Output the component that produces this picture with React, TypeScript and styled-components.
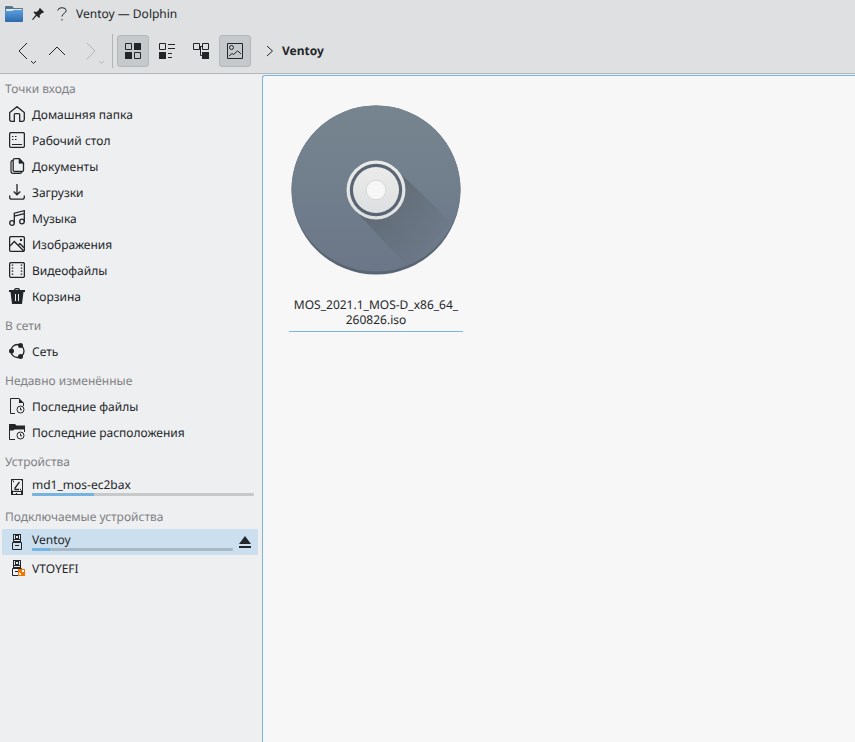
import React from "react";
import styled, { createGlobalStyle } from "styled-components";

const ink = "#232629";

const GlobalStyle = createGlobalStyle`
  *, *::before, *::after { box-sizing: border-box; }
  html, body, #root { height: 100%; }
  body {
    margin: 0;
    background: #eeeff1;
    color: ${ink};
    font-family: "Noto Sans", "Open Sans", sans-serif;
    font-size: 12px;
    line-height: 16px;
    text-rendering: geometricPrecision;
  }
  button { font: inherit; color: inherit; }
`;

const Window = styled.div`
  display: flex;
  flex-direction: column;
  min-height: 100vh;
`;

const Chrome = styled.header`
  background: #dee0e2;
  border-bottom: 1px solid #b2b4b7;
`;

const TitleBar = styled.div`
  display: flex;
  align-items: center;
  height: 28px;
  padding-left: 4px;
`;

const TitleButtons = styled.div`
  display: flex;
  margin-left: 2px;
`;

const TitleButton = styled.button`
  display: flex;
  align-items: center;
  justify-content: center;
  width: 24px;
  height: 24px;
  padding: 0;
  border: 0;
  background: none;
`;

const Title = styled.h1`
  margin: 0 0 0 2px;
  font-size: 12px;
  font-weight: 400;
`;

const Toolbar = styled.nav`
  display: flex;
  align-items: center;
  gap: 2px;
  height: 45px;
  padding: 0 7px;
`;

const ToolButton = styled.button<{ $checked?: boolean }>`
  position: relative;
  display: flex;
  align-items: center;
  justify-content: center;
  width: 32px;
  height: 32px;
  padding: 0;
  border: 1px solid ${(p) => (p.$checked ? "#b5b8ba" : "transparent")};
  border-radius: 3px;
  background: ${(p) => (p.$checked ? "#c5c9cc" : "transparent")};
  &:disabled { color: #b3b6b9; }
`;

const MenuMark = styled.svg`
  position: absolute;
  right: 1px;
  bottom: 1px;
`;

const Separator = styled.div`
  width: 1px;
  height: 34px;
  margin: 0 2px 0 3px;
  background: #b2b4b7;
`;

const Breadcrumb = styled.a`
  display: flex;
  align-items: center;
  gap: 5px;
  margin-left: 8px;
  color: inherit;
  font-weight: 700;
  text-decoration: none;
`;

const Body = styled.div`
  display: grid;
  grid-template-columns: 262px 1fr;
  flex: 1;
`;

const Sidebar = styled.aside`
  padding: 1px 4px 1px 2px;
`;

const Section = styled.section`
  margin-bottom: 3px;
`;

const Heading = styled.h2`
  margin: 0;
  padding: 6px 3px 4px;
  color: #7f8183;
  font-size: 12px;
  font-weight: 400;
`;

const List = styled.ul`
  margin: 0;
  padding: 0;
  list-style: none;
`;

const Row = styled.li<{ $selected?: boolean }>`
  display: flex;
  align-items: center;
  height: 26px;
  background: ${(p) => (p.$selected ? "#cbdfef" : "transparent")};
`;

const Place = styled.a`
  display: flex;
  flex: 1;
  align-items: center;
  gap: 7px;
  padding: 0 4px 0 7px;
  color: inherit;
  text-decoration: none;
  white-space: nowrap;
`;

const PlaceBody = styled.span<{ $metered: boolean }>`
  flex: 1;
  padding: ${(p) => (p.$metered ? "0 0 1px" : "2px 0 0")};
`;

const Capacity = styled.span<{ $selected?: boolean }>`
  display: block;
  height: 3px;
  overflow: hidden;
  border-radius: 1px;
  background: ${(p) => (p.$selected ? "#a8b8c5" : "#c6c8c9")};
`;

const Used = styled.span`
  display: block;
  height: 100%;
  background: #76b3df;
`;

const Eject = styled.button`
  display: flex;
  align-items: center;
  justify-content: center;
  width: 16px;
  height: 24px;
  margin-right: 5px;
  padding: 0;
  border: 0;
  background: none;
`;

const View = styled.main`
  display: flex;
  flex-wrap: wrap;
  align-items: flex-start;
  align-content: flex-start;
  margin-top: 1px;
  padding: 29px 26px;
  border: solid #79b5dc;
  border-width: 1px 0 0 1px;
  border-top-left-radius: 3px;
  background: #f7f7f7;
`;

const File = styled.figure`
  display: flex;
  flex-direction: column;
  align-items: center;
  width: 174px;
  margin: 0;
  border-bottom: 1px solid #79b5dc;
`;

const FileName = styled.figcaption`
  margin-top: 22px;
  padding-bottom: 4px;
  line-height: 15px;
  text-align: center;
`;

type GlyphProps = { children: React.ReactNode };
const Glyph = ({ children }: GlyphProps) => (
  <svg width="16" height="16" viewBox="0 0 16 16" fill="none" stroke="currentColor" aria-hidden="true">
    {children}
  </svg>
);

const Clock = () => (
  <>
    <circle cx="11.5" cy="11.5" r="3.5" />
    <path d="M11.5 9.5v2.3H13" />
  </>
);

const Usb = () => (
  <>
    <path d="M4 0h8v8H4z" fill="currentColor" stroke="none" />
    <path d="M5 1h1v4H5zM7 2h2v2H7zM10 1h1v4h-1zM5 6h6v1H5z" fill="#e3e9ee" stroke="none" />
    <path d="M3.500 8.500h9v7h-9zM6 11.500h4" />
  </>
);

const icons = {
  home: (
    <Glyph>
      <path d="M.7 13.5V6.6L8 .7l7.3 5.9v6.9q0 1.8-1.8 1.8h-2.8V8.6q0-1-1-1H6.3q-1 0-1 1v6.700H2.5Q.7 15.3.7 13.5z" strokeWidth="1.3" />
    </Glyph>
  ),
  desktop: (
    <Glyph>
      <rect x=".6" y=".6" width="14.8" height="14.8" rx="1.5" strokeWidth="1.3" />
      <path d="M3 4.500h1.500M6 4.500h1.500M3 7.500h1.500M6 7.500h1.500M3 12.500h10" strokeWidth="1.2" />
    </Glyph>
  ),
  documents: (
    <Glyph>
      <path d="M4 2.300q-2 0-2 2v9q0 2 2 2h7q1.500 0 1.800-1.500" strokeWidth="1.2" />
      <path d="M5.800.7h4.500l4.200 4.200v7q0 1.600-1.600 1.600H5.800q-1.600 0-1.600-1.600V2.300Q4.200.7 5.800.7z" strokeWidth="1.3" />
      <path d="M10 .7v4.600h4.500z" fill="currentColor" strokeWidth=".6" />
    </Glyph>
  ),
  downloads: (
    <Glyph>
      <path d="M8 0v10.500M4.700 7.500 8 10.800l3.300-3.300M.7 11.500v1.800q0 1.900 1.900 1.900h10.800q1.900 0 1.900-1.900v-1.800" strokeWidth="1.3" />
    </Glyph>
  ),
  music: (
    <Glyph>
      <path d="M5.300 13V3.200L15.300.7v10.800M5.300 6.200l10-2.500" strokeWidth="1.3" />
      <circle cx="3" cy="13" r="2.3" strokeWidth="1.3" />
      <circle cx="13" cy="11.5" r="2.3" strokeWidth="1.3" />
    </Glyph>
  ),
  images: (
    <Glyph>
      <rect x=".6" y=".6" width="14.8" height="14.8" rx="1.5" strokeWidth="1.3" />
      <path d="m1 10 4.300-4.500 9.500 9.500M9 9.500l2-1.800 4 4" strokeWidth="1.3" />
      <path d="M11 3h2v2h-2z" fill="currentColor" stroke="none" />
    </Glyph>
  ),
  videos: (
    <Glyph>
      <rect x=".6" y=".6" width="14.8" height="14.8" rx="1.5" strokeWidth="1.3" />
      <path d="M3.500 2.500v11.500M12.500 2.500v11.500" strokeDasharray="1.3 1.7" strokeWidth="1.5" />
    </Glyph>
  ),
  trash: (
    <Glyph>
      <path d="M5.500 2.500q0-2 2.500-2t2.500 2" strokeWidth="1.3" />
      <path d="M0 2h16v2h-1.500L13 16H3L1.500 4H0z" fill="currentColor" stroke="none" />
      <path d="M6.500 6v7M9.500 6v7" stroke="#eeeff1" />
    </Glyph>
  ),
  network: (
    <Glyph>
      <circle cx="8.500" cy="8" r="6.500" strokeWidth="1.3" />
      <g fill="currentColor" stroke="none">
        <circle cx="2.500" cy="8" r="2.500" />
        <circle cx="11.500" cy="2.500" r="2.500" />
        <circle cx="11.500" cy="13.500" r="2.500" />
      </g>
    </Glyph>
  ),
  recentFiles: (
    <Glyph>
      <path d="M6 15.500H1.500V.5H10M14.500 5v3" />
      <path d="M10 0v5h5z" fill="currentColor" stroke="none" />
      <Clock />
    </Glyph>
  ),
  recentPlaces: (
    <Glyph>
      <path d="M0 0h6l1.500 1.500H16v4H5.500L4 6.500H0z" fill="currentColor" stroke="none" />
      <path d="M.5 5v10.500H6M15.500 5v3" />
      <Clock />
    </Glyph>
  ),
  disk: (
    <Glyph>
      <path d="M2 0h12v16H2z" fill="currentColor" stroke="none" />
      <path d="M4 1h8l1 1v9l-1 1H4l-1-1V2zM4 13h8v2H4z" fill="#eeeff1" stroke="none" />
      <path d="M10.500 3 6 9v1.500h4M4 2.500h1M11 10.500h1M7.500 14v1" strokeWidth="1.3" />
    </Glyph>
  ),
  usb: (
    <Glyph>
      <Usb />
    </Glyph>
  ),
  usbUnmounted: (
    <Glyph>
      <Usb />
      <rect x="9" y="9" width="7" height="7" fill="#f67400" stroke="none" />
      <path d="m10 15 2-2M13 12l2-2M10.500 12.500v2H12M13 10.500h1.500V12" stroke="#fff" />
    </Glyph>
  ),
};

type Item = { label: string; icon: keyof typeof icons; used?: number; selected?: boolean };
const sections: { title: string; items: Item[] }[] = [
  {
    title: "Точки входа",
    items: [
      { label: "Домашняя папка", icon: "home" },
      { label: "Рабочий стол", icon: "desktop" },
      { label: "Документы", icon: "documents" },
      { label: "Загрузки", icon: "downloads" },
      { label: "Музыка", icon: "music" },
      { label: "Изображения", icon: "images" },
      { label: "Видеофайлы", icon: "videos" },
      { label: "Корзина", icon: "trash" },
    ],
  },
  { title: "В сети", items: [{ label: "Сеть", icon: "network" }] },
  {
    title: "Недавно изменённые",
    items: [
      { label: "Последние файлы", icon: "recentFiles" },
      { label: "Последние расположения", icon: "recentPlaces" },
    ],
  },
  { title: "Устройства", items: [{ label: "md1_mos-ec2bax", icon: "disk", used: 28 }] },
  {
    title: "Подключаемые устройства",
    items: [
      { label: "Ventoy", icon: "usb", used: 9, selected: true },
      { label: "VTOYEFI", icon: "usbUnmounted" },
    ],
  },
];

const SmallArrow = () => (
  <MenuMark width="7" height="5" viewBox="0 0 7 5" fill="none" stroke="currentColor" aria-hidden="true">
    <path d="m1 1 2.500 2.500L6 1" />
  </MenuMark>
);

const Disc = () => (
  <svg width="170" height="170" viewBox="0 0 170 170" role="img" aria-label="ISO">
    <defs>
      <linearGradient id="disc" x1="0" y1="0" x2="0" y2="1">
        <stop offset="0" stopColor="#778590" />
        <stop offset="1" stopColor="#6b7788" />
      </linearGradient>
      <linearGradient id="shade" gradientUnits="userSpaceOnUse" x1="85" y1="85" x2="145" y2="145">
        <stop offset="0" stopColor="#565f67" stopOpacity=".65" />
        <stop offset="1" stopColor="#565f67" stopOpacity="0" />
      </linearGradient>
      <linearGradient id="hub" x1="0" y1="0" x2="0" y2="1">
        <stop offset="0" stopColor="#ebebeb" />
        <stop offset="1" stopColor="#dedfe0" />
      </linearGradient>
      <clipPath id="edge">
        <circle cx="85" cy="85" r="84.5" />
      </clipPath>
    </defs>
    <circle cx="85" cy="85" r="84.5" fill="#596572" />
    <g clipPath="url(#edge)">
      <ellipse cx="85" cy="82" rx="85" ry="84.5" fill="url(#disc)" />
      <path d="m105.500 64.500 56 54-45 43L64 105.500z" fill="url(#shade)" />
    </g>
    <circle cx="85" cy="85" r="29.5" fill="url(#hub)" />
    <circle cx="85" cy="85" r="26.2" fill="#596572" />
    <circle cx="85" cy="85" r="23" fill="url(#hub)" />
    <circle cx="85" cy="85" r="9.8" fill="#f7f7f7" stroke="#cfd0d1" strokeWidth=".8" />
  </svg>
);

export default function App() {
  return (
    <Window>
      <GlobalStyle />
      <Chrome>
        <TitleBar>
          <svg width="20" height="18" viewBox="0 0 20 18" aria-hidden="true">
            <defs>
              <linearGradient id="folder" x1="0" y1="0" x2="0" y2="1">
                <stop offset="0" stopColor="#5a9fe0" />
                <stop offset="1" stopColor="#2e68aa" />
              </linearGradient>
            </defs>
            <path d="M1 2q0-1 1-1h6l2 2h8q1 0 1 1v6H1z" fill="#55778a" />
            <path d="M2 4h16v4H2z" fill="#e3e6e8" />
            <path d="M1 6h7l2-1h9v11q0 1-1 1H2q-1 0-1-1z" fill="url(#folder)" />
          </svg>
          <TitleButtons>
            <TitleButton aria-label="Закрепить">
              <svg width="12" height="12" viewBox="0 0 12 12" aria-hidden="true">
                <path d="M8 0 12 4l-1 1h-1L7.500 7.500 8 9 7 10 4.700 7.700 1 12 0 11.500 3.800 6.800 1.500 4.500l1-1L4.500 4 7 2V1z" fill={ink} />
              </svg>
            </TitleButton>
            <TitleButton aria-label="Справка">
              <svg width="10" height="14" viewBox="0 0 10 14" fill="none" stroke={ink} aria-hidden="true">
                <path d="M.8 3.500Q1 .7 5 .7t4.200 2.800Q9.200 5.200 7 6.500 5 7.700 5 9.500M5 12v1.500" />
              </svg>
            </TitleButton>
          </TitleButtons>
          <Title>Ventoy — Dolphin</Title>
        </TitleBar>
        <Toolbar>
          <ToolButton aria-label="Назад">
            <svg width="16" height="18" viewBox="0 0 16 18" fill="none" stroke="currentColor" aria-hidden="true">
              <path d="M12 1 4 9l8 8" />
            </svg>
            <SmallArrow />
          </ToolButton>
          <ToolButton aria-label="Вверх">
            <svg width="18" height="16" viewBox="0 0 18 16" fill="none" stroke="currentColor" aria-hidden="true">
              <path d="m1 12 8-8 8 8" />
            </svg>
          </ToolButton>
          <ToolButton aria-label="Вперёд" disabled>
            <svg width="16" height="18" viewBox="0 0 16 18" fill="none" stroke="currentColor" aria-hidden="true">
              <path d="m4 1 8 8-8 8" />
            </svg>
            <SmallArrow />
          </ToolButton>
          <Separator />
          <ToolButton $checked aria-pressed="true" aria-label="Значки">
            <Glyph>
              <path d="M.5.5h6v6h-6zM9.500 9.500h6v6h-6z" />
              <path d="M9 0h7v7H9zM0 9h7v7H0z" fill="currentColor" stroke="none" />
            </Glyph>
          </ToolButton>
          <ToolButton aria-label="Компактный вид">
            <Glyph>
              <path d="M.5.5h6v6h-6zM9 1.500h7M9 5.500h7M9 10.500h4M9 14.500h4" />
              <path d="M0 9h7v7H0z" fill="currentColor" stroke="none" />
            </Glyph>
          </ToolButton>
          <ToolButton aria-label="Дерево">
            <Glyph>
              <path d="M.5.5h6v6h-6zM9.500.5h6v6h-6zM7 3.500h2M7.500 4v8.500H9" />
              <path d="M9 9h7v7H9z" fill="currentColor" stroke="none" />
            </Glyph>
          </ToolButton>
          <ToolButton $checked aria-pressed="true" aria-label="Миниатюры">
            <Glyph>
              <path d="M.5.5h15v15H.5z" />
              <circle cx="4.500" cy="4.500" r="2" />
              <path d="m2 13 3-2.500 1.500 1L10.500 8l1.500 1 2 2" />
            </Glyph>
          </ToolButton>
          <Breadcrumb href="#ventoy">
            <svg width="16" height="16" viewBox="0 0 16 16" fill="none" stroke={ink} aria-hidden="true">
              <path d="m6 3 5.500 5L6 13" />
            </svg>
            Ventoy
          </Breadcrumb>
        </Toolbar>
      </Chrome>
      <Body>
        <Sidebar>
          {sections.map((section) => (
            <Section key={section.title}>
              <Heading>{section.title}</Heading>
              <List>
                {section.items.map((item) => (
                  <Row key={item.label} $selected={item.selected}>
                    <Place href="#place">
                      {icons[item.icon]}
                      <PlaceBody $metered={item.used !== undefined}>
                        {item.label}
                        {item.used !== undefined && (
                          <Capacity $selected={item.selected}>
                            <Used style={{ width: `${item.used}%` }} />
                          </Capacity>
                        )}
                      </PlaceBody>
                    </Place>
                    {item.selected && (
                      <Eject aria-label="Извлечь">
                        <svg width="12" height="12" viewBox="0 0 12 12" fill={ink} aria-hidden="true">
                          <path d="m6 0 6 8H0zM0 10h12v2H0z" />
                        </svg>
                      </Eject>
                    )}
                  </Row>
                ))}
              </List>
            </Section>
          ))}
        </Sidebar>
        <View>
          <File>
            <Disc />
            <FileName>
              MOS_2021.1_MOS-D_x86_64_
              <br />
              260826.iso
            </FileName>
          </File>
        </View>
      </Body>
    </Window>
  );
}
